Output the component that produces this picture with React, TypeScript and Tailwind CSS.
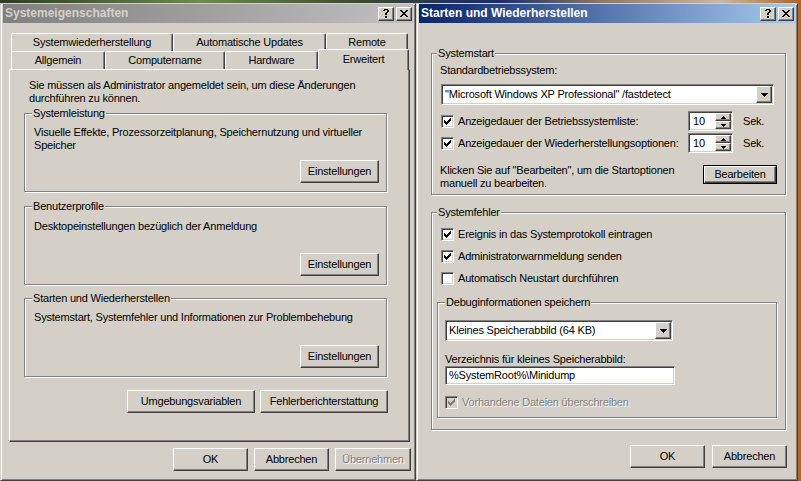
import React from "react";

const RAISED =
  "bg-[#d4d0c8] border border-t-white border-l-white border-r-[#404040] border-b-[#404040] shadow-[inset_-1px_-1px_0_#808080]";
const SUNKEN =
  "border border-t-[#808080] border-l-[#808080] border-r-white border-b-white shadow-[inset_1px_1px_0_#404040,inset_-1px_-1px_0_#d4d0c8]";
const ETCHED = "border border-[#808080] shadow-[1px_1px_0_#fff,inset_1px_1px_0_#fff]";
const FRAME =
  "border border-t-[#d4d0c8] border-l-[#d4d0c8] border-r-[#404040] border-b-[#404040] bg-[#d4d0c8] px-[2px] pb-[2px] shadow-[inset_1px_1px_0_#fff,inset_-1px_-1px_0_#808080]";

const CHECK = ["0000001", "0000011", "1000111", "1101110", "1111100", "0111000", "0010000"];
const CLOSE = ["11000011", "01100110", "00111100", "00011000", "00111100", "01100110", "11000011"];
const HELP = ["011110", "110011", "000011", "000110", "001100", "001100", "000000", "001100", "001100"];
const DOWN = ["1111111", "0111110", "0011100", "0001000"];
const UP_S = ["00100", "01110", "11111"];
const DOWN_S = ["11111", "01110", "00100"];

function Pixels({ rows, color = "#000" }: { rows: string[]; color?: string }) {
  const w = rows[0].length;
  const h = rows.length;
  let d = "";
  rows.forEach((r, y) => {
    r.split("").forEach((c, x) => {
      if (c === "1") d += `M${x} ${y}h1v1h-1z`;
    });
  });
  return (
    <svg width={w} height={h} viewBox={`0 0 ${w} ${h}`} shapeRendering="crispEdges" className="block">
      <path d={d} fill={color} />
    </svg>
  );
}

function TitleBar({ title, active }: { title: string; active: boolean }) {
  return (
    <div
      className={`flex h-[19px] shrink-0 items-center pl-[2px] pr-[1px] ${
        active
          ? "bg-[linear-gradient(90deg,#0a246a,#a6caf0)] text-white"
          : "bg-[linear-gradient(90deg,#808080,#c0c0c0)] text-[#d4d0c8]"
      }`}
    >
      <span className="flex-1 text-[12px] font-bold tracking-normal">{title}</span>
      <div className="flex gap-[2px]">
        <div className={`${RAISED} flex h-[14px] w-[16px] items-center justify-center`}>
          <Pixels rows={HELP} />
        </div>
        <div className={`${RAISED} flex h-[14px] w-[16px] items-center justify-center`}>
          <Pixels rows={CLOSE} />
        </div>
      </div>
    </div>
  );
}

function Btn({ label, className = "", disabled = false }: { label: string; className?: string; disabled?: boolean }) {
  return (
    <div
      className={`${RAISED} flex shrink-0 items-center justify-center ${
        disabled ? "text-[#808080] [text-shadow:1px_1px_0_#fff]" : ""
      } ${className}`}
    >
      {label}
    </div>
  );
}

function Group({
  label,
  className = "",
  labelPos = "left-[7px]",
  children,
}: {
  label: string;
  className?: string;
  labelPos?: string;
  children?: React.ReactNode;
}) {
  return (
    <div className={`relative shrink-0 ${ETCHED} ${className}`}>
      <span className={`absolute -top-[7px] ${labelPos} bg-[#d4d0c8] px-[1px] leading-[13px]`}>{label}</span>
      {children}
    </div>
  );
}

function Check({ checked, disabled = false }: { checked: boolean; disabled?: boolean }) {
  return (
    <div
      className={`${SUNKEN} flex h-[13px] w-[13px] shrink-0 items-center justify-center ${
        disabled ? "bg-[#d4d0c8]" : "bg-white"
      }`}
    >
      {checked && <Pixels rows={CHECK} color={disabled ? "#808080" : "#000"} />}
    </div>
  );
}

function Combo({ text, className = "" }: { text: string; className?: string }) {
  return (
    <div className={`${SUNKEN} flex shrink-0 items-stretch bg-white p-[1px] ${className}`}>
      <span className="flex flex-1 items-center overflow-hidden whitespace-nowrap pl-[2px]">{text}</span>
      <div className={`${RAISED} flex w-[16px] items-center justify-center`}>
        <Pixels rows={DOWN} />
      </div>
    </div>
  );
}

function Spinner({ value }: { value: string }) {
  return (
    <div className={`${SUNKEN} flex h-[20px] w-[45px] shrink-0 bg-white p-[1px]`}>
      <span className="flex flex-1 items-center pl-[3px]">{value}</span>
      <div className="flex w-[16px] flex-col">
        <div className={`${RAISED} flex flex-1 items-center justify-center`}>
          <Pixels rows={UP_S} />
        </div>
        <div className={`${RAISED} flex flex-1 items-center justify-center`}>
          <Pixels rows={DOWN_S} />
        </div>
      </div>
    </div>
  );
}

const TAB = "flex shrink-0 items-center justify-center border-t border-l border-r border-t-white border-l-white border-r-[#404040] rounded-t-[2px] shadow-[inset_-1px_0_0_#808080] bg-[#d4d0c8]";

function LeftWindow() {
  return (
    <div className={`flex h-[478px] w-[416px] shrink-0 flex-col ${FRAME}`}>
      <TitleBar title="Systemeigenschaften" active={false} />
      <div className="ml-[6px] mt-[10px] flex w-[401px] flex-col">
        <div className="flex h-[18px] pl-[2px]">
          <div className={`${TAB} w-[162px]`}>Systemwiederherstellung</div>
          <div className={`${TAB} w-[153px]`}>Automatische Updates</div>
          <div className={`${TAB} w-[82px]`}>Remote</div>
        </div>
        <div className="flex h-[18px] items-end pl-[2px]">
          <div className={`${TAB} h-[18px] w-[94px]`}>Allgemein</div>
          <div className={`${TAB} h-[18px] w-[120px]`}>Computername</div>
          <div className={`${TAB} h-[18px] w-[93px]`}>Hardware</div>
          <div className={`${TAB} relative z-10 -mb-[1px] h-[21px] w-[91px] pb-[2px]`}>Erweitert</div>
        </div>
        <div className={`${RAISED} flex h-[373px] w-[401px] flex-col pl-[14px] pt-[9px]`}>
          <div className="ml-[5px]">
            Sie müssen als Administrator angemeldet sein, um diese Änderungen
            <br />
            durchführen zu können.
          </div>
          <Group label="Systemleistung" className="mt-[8px] flex h-[79px] w-[363px] flex-col pl-[9px] pt-[12px] pr-[7px] pb-[8px]">
            <div>
              Visuelle Effekte, Prozessorzeitplanung, Speichernutzung und virtueller
              <br />
              Speicher
            </div>
            <div className="mt-auto flex justify-end">
              <Btn label="Einstellungen" className="h-[23px] w-[79px]" />
            </div>
          </Group>
          <Group label="Benutzerprofile" className="mt-[14px] flex h-[79px] w-[363px] flex-col pl-[9px] pt-[13px] pr-[7px] pb-[8px]">
            <div>Desktopeinstellungen bezüglich der Anmeldung</div>
            <div className="mt-auto flex justify-end">
              <Btn label="Einstellungen" className="h-[23px] w-[79px]" />
            </div>
          </Group>
          <Group label="Starten und Wiederherstellen" className="mt-[13px] flex h-[79px] w-[363px] flex-col pl-[9px] pt-[12px] pr-[7px] pb-[8px]">
            <div>Systemstart, Systemfehler und Informationen zur Problembehebung</div>
            <div className="mt-auto flex justify-end">
              <Btn label="Einstellungen" className="h-[23px] w-[79px]" />
            </div>
          </Group>
          <div className="mt-[13px] flex w-[364px] justify-end gap-[5px]">
            <Btn label="Umgebungsvariablen" className="h-[23px] w-[128px]" />
            <Btn label="Fehlerberichterstattung" className="h-[23px] w-[128px]" />
          </div>
        </div>
      </div>
      <div className="mt-[6px] flex justify-end gap-[6px] pr-[2px]">
        <Btn label="OK" className="h-[23px] w-[75px]" />
        <Btn label="Abbrechen" className="h-[23px] w-[75px]" />
        <Btn label="Übernehmen" className="h-[23px] w-[76px]" disabled />
      </div>
    </div>
  );
}

function CheckRow({ label, checked, disabled = false }: { label: string; checked: boolean; disabled?: boolean }) {
  return (
    <div className="flex h-[22px] items-center gap-[4px]">
      <Check checked={checked} disabled={disabled} />
      <span className={disabled ? "text-[#808080] [text-shadow:1px_1px_0_#fff]" : ""}>{label}</span>
    </div>
  );
}

function RightWindow() {
  return (
    <div className={`flex h-[478px] w-[382px] shrink-0 flex-col ${FRAME}`}>
      <TitleBar title="Starten und Wiederherstellen" active={true} />
      <Group label="Systemstart" labelPos="left-[5px]" className="ml-[12px] mt-[30px] flex h-[142px] w-[355px] flex-col pl-[8px] pr-[8px] pt-[10px]">
        <div>Standardbetriebssystem:</div>
        <Combo text={'"Microsoft Windows XP Professional" /fastdetect'} className="ml-[1px] mt-[7px] h-[21px] w-[333px]" />
        <div className="ml-[1px] mt-[5px] flex flex-col">
          <div className="flex h-[22px] items-center">
            <div className="flex w-[247px] items-center gap-[4px]">
              <Check checked />
              <span>Anzeigedauer der Betriebssystemliste:</span>
            </div>
            <Spinner value="10" />
            <span className="ml-[10px]">Sek.</span>
          </div>
          <div className="flex h-[22px] items-center">
            <div className="flex w-[247px] items-center gap-[4px]">
              <Check checked />
              <span>Anzeigedauer der Wiederherstellungsoptionen:</span>
            </div>
            <Spinner value="10" />
            <span className="ml-[10px]">Sek.</span>
          </div>
        </div>
        <div className="mt-[10px] flex items-start">
          <div>
            Klicken Sie auf "Bearbeiten", um die Startoptionen
            <br />
            manuell zu bearbeiten.
          </div>
          <div className="ml-auto mt-[1px] h-[19px] w-[74px] border border-black">
            <div className={`${RAISED} flex h-full w-full items-center justify-center`}>Bearbeiten</div>
          </div>
        </div>
      </Group>
      <Group label="Systemfehler" labelPos="left-[5px]" className="ml-[12px] mt-[17px] flex h-[218px] w-[355px] flex-col pl-[9px] pt-[10px]">
        <CheckRow label="Ereignis in das Systemprotokoll eintragen" checked />
        <CheckRow label="Administratorwarnmeldung senden" checked />
        <CheckRow label="Automatisch Neustart durchführen" checked={false} />
        <Group label="Debuginformationen speichern" className="-ml-[4px] mt-[13px] flex h-[116px] w-[340px] flex-col pl-[7px] pt-[17px]">
          <Combo text="Kleines Speicherabbild (64 KB)" className="h-[21px] w-[228px]" />
          <div className="mt-[12px]">Verzeichnis für kleines Speicherabbild:</div>
          <div className={`${SUNKEN} flex h-[19px] w-[230px] items-center bg-white pl-[3px]`}>%SystemRoot%\Minidump</div>
          <div className="mt-[6px]">
            <CheckRow label="Vorhandene Dateien überschreiben" checked disabled />
          </div>
        </Group>
      </Group>
      <div className="mt-[15px] flex justify-end gap-[7px] pr-[8px]">
        <Btn label="OK" className="h-[23px] w-[75px]" />
        <Btn label="Abbrechen" className="h-[23px] w-[75px]" />
      </div>
    </div>
  );
}

export default function App() {
  return (
    <div className="flex h-[481px] w-[801px] overflow-hidden bg-[linear-gradient(90deg,#2d3b22_0%,#6f8a4a_25%,#3b4a2c_45%,#1a2a6a_62%,#8a7a60_75%,#c8b8a0_90%,#b0642a_100%)] pt-[3px] font-['Liberation_Sans',Arial,sans-serif] text-[11px] leading-[13px] tracking-[-0.2px] text-black">
      <LeftWindow />
      <RightWindow />
    </div>
  );
}
